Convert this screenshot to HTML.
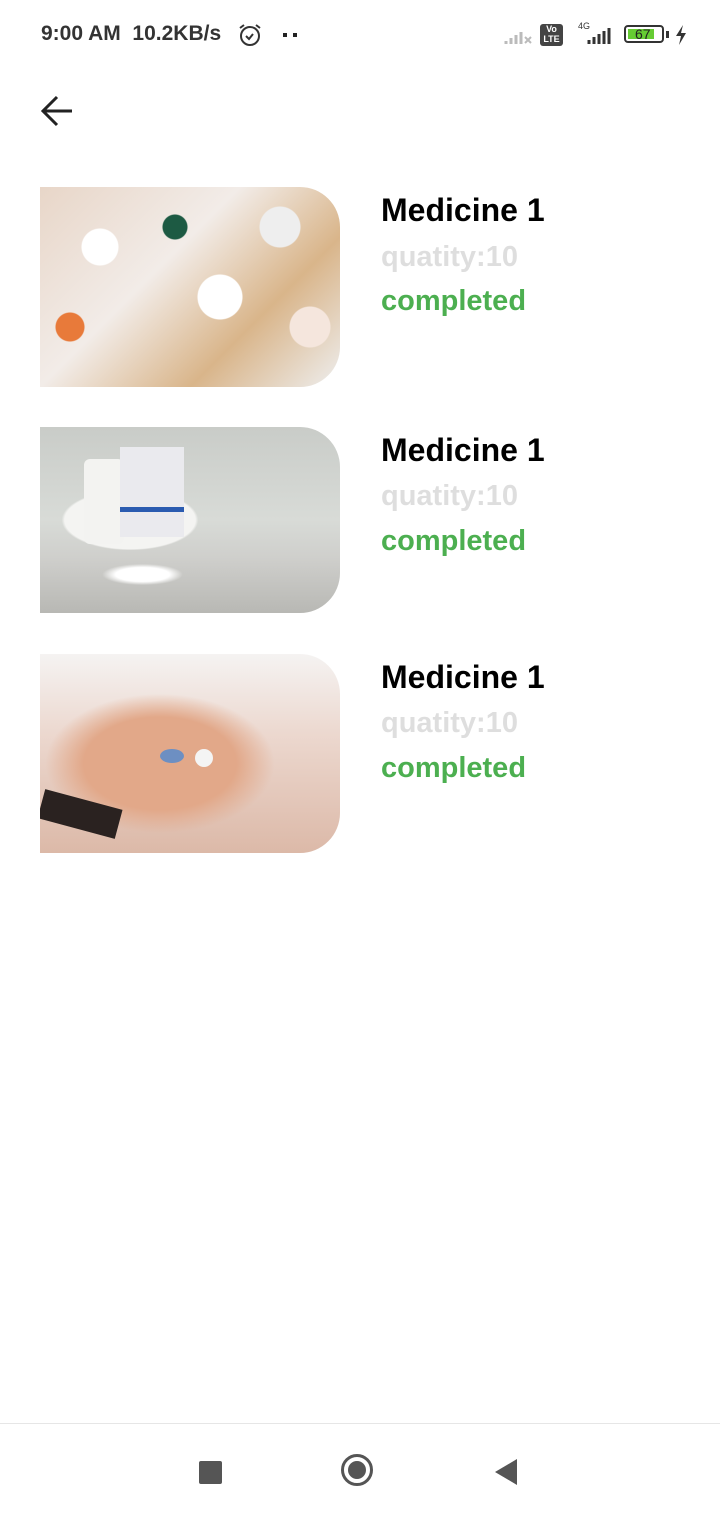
<!DOCTYPE html>
<html><head><meta charset="utf-8"><style>
body{margin:0;width:720px;height:1520px;background:#fff;font-family:"Liberation Sans",Arial,sans-serif;position:relative;overflow:hidden}
.a{position:absolute}
.img{position:absolute;left:40px;width:300px;border-radius:0 40px 40px 0;overflow:hidden}
.t{position:absolute;left:381px;font-weight:bold;font-size:32px;color:#000;white-space:nowrap}
.q{position:absolute;left:381px;font-size:29px;color:#dedede;font-weight:bold;white-space:nowrap}
.c{position:absolute;left:381px;font-size:29px;color:#4caf50;font-weight:bold;white-space:nowrap}
</style></head><body>
<div class="a" style="left:41px;top:22px;font-size:21px;font-weight:bold;color:#333">9:00 AM&nbsp; 10.2KB/s</div>
<svg class="a" style="left:237px;top:22px" width="26" height="26"><circle cx="13" cy="14" r="9" fill="none" stroke="#333" stroke-width="2"/><path d="M9 14l3 3 4-5M3 6l4-3M23 6l-4-3" fill="none" stroke="#333" stroke-width="2"/></svg>
<div class="a" style="left:283px;top:33px;width:4px;height:4px;background:#222"></div><div class="a" style="left:293px;top:33px;width:4px;height:4px;background:#222"></div>
<svg class="a" style="left:504px;top:24px" width="30" height="22"><path d="M2 20v-3M7 20v-6M12 20v-9M17 20v-12" stroke="#bbb" stroke-width="3"/><path d="M21 13l6 6M27 13l-6 6" stroke="#bbb" stroke-width="2"/></svg>
<div class="a" style="left:540px;top:24px;width:23px;height:22px;background:#444;border-radius:3px;color:#fff;font-size:9px;line-height:10px;text-align:center;font-weight:bold">Vo<br>LTE</div>
<svg class="a" style="left:576px;top:20px" width="38" height="26"><text x="2" y="9" font-size="9" fill="#333" font-family="Liberation Sans">4G</text><path d="M13 24v-4M18 24v-7M23 24v-10M28 24v-13M33 24v-16" stroke="#333" stroke-width="3"/></svg>
<div class="a" style="left:624px;top:25px;width:40px;height:18px;border:2px solid #333;border-radius:4px;box-sizing:border-box"><div style="position:absolute;left:2px;top:2px;width:26px;height:10px;background:#6c3"></div><span style="position:absolute;left:9px;top:-1px;font-size:14px;color:#222">67</span></div>
<div class="a" style="left:666px;top:31px;width:3px;height:7px;background:#333"></div>
<svg class="a" style="left:674px;top:24px" width="14" height="22"><path d="M9 1L2 12h5l-2 9 7-12H7z" fill="#333"/></svg>
<svg class="a" style="left:38px;top:93px" width="38" height="36"><path d="M34 18H5M19 4L5 18l14 14" fill="none" stroke="#222" stroke-width="3"/></svg>

<div class="img" style="top:187px;height:200px;background:radial-gradient(circle at 20% 30%,#fff 0 18px,transparent 19px),radial-gradient(circle at 60% 55%,#fff 0 22px,transparent 23px),radial-gradient(circle at 80% 20%,#eee 0 20px,transparent 21px),radial-gradient(circle at 45% 20%,#1d5a43 0 12px,transparent 13px),radial-gradient(circle at 10% 70%,#e87a3a 0 14px,transparent 15px),radial-gradient(circle at 90% 70%,#f5e6dd 0 20px,transparent 21px),linear-gradient(135deg,#e8d6c8,#f2ece8 40%,#d9b58a 70%,#eee)"></div>
<div class="t" style="top:192px">Medicine 1</div>
<div class="q" style="top:241px">quatity:10</div>
<div class="c" style="top:285px">completed</div>

<div class="img" style="top:427px;height:186px;background:radial-gradient(ellipse at 30% 50%,#f4f4f2 0 22%,transparent 23%),linear-gradient(180deg,#c9ccc8 0%,#d8dbd7 50%,#cfcfcc 70%,#b8b8b4 100%)"><div style="position:absolute;left:44px;top:32px;width:40px;height:85px;background:#f3f3f1;border-radius:6px"></div><div style="position:absolute;left:80px;top:20px;width:64px;height:90px;background:#eaeaee"><div style="position:absolute;top:60px;width:64px;height:5px;background:#2a5bb0"></div></div><div style="position:absolute;left:55px;top:135px;width:95px;height:25px;background:radial-gradient(ellipse,#fff 40%,transparent 60%)"></div></div>
<div class="t" style="top:432px">Medicine 1</div>
<div class="q" style="top:480px">quatity:10</div>
<div class="c" style="top:525px">completed</div>

<div class="img" style="top:654px;height:199px;background:radial-gradient(ellipse at 40% 55%,#e2a889 0 30%,transparent 45%),linear-gradient(180deg,#f5f3f2 0%,#ecd8cf 40%,#dcb9a8 100%)"><div style="position:absolute;left:0;top:145px;width:80px;height:30px;background:#2a2220;transform:rotate(15deg)"></div><div style="position:absolute;left:120px;top:95px;width:24px;height:14px;background:#6d8fc2;border-radius:50%"></div><div style="position:absolute;left:155px;top:95px;width:18px;height:18px;background:#f4f4f4;border-radius:50%"></div></div>
<div class="t" style="top:659px">Medicine 1</div>
<div class="q" style="top:707px">quatity:10</div>
<div class="c" style="top:752px">completed</div>

<div class="a" style="left:0;top:1423px;width:720px;height:1px;background:#e6e6e6"></div>
<div class="a" style="left:199px;top:1461px;width:23px;height:23px;background:#555;border-radius:2px"></div>
<div class="a" style="left:341px;top:1454px;width:32px;height:32px;border:3px solid #555;border-radius:50%;box-sizing:border-box"><div style="position:absolute;left:4px;top:4px;width:18px;height:18px;background:#555;border-radius:50%"></div></div>
<svg class="a" style="left:493px;top:1458px" width="26" height="28"><path d="M24 1v26L2 14z" fill="#555"/></svg>
</body></html>
